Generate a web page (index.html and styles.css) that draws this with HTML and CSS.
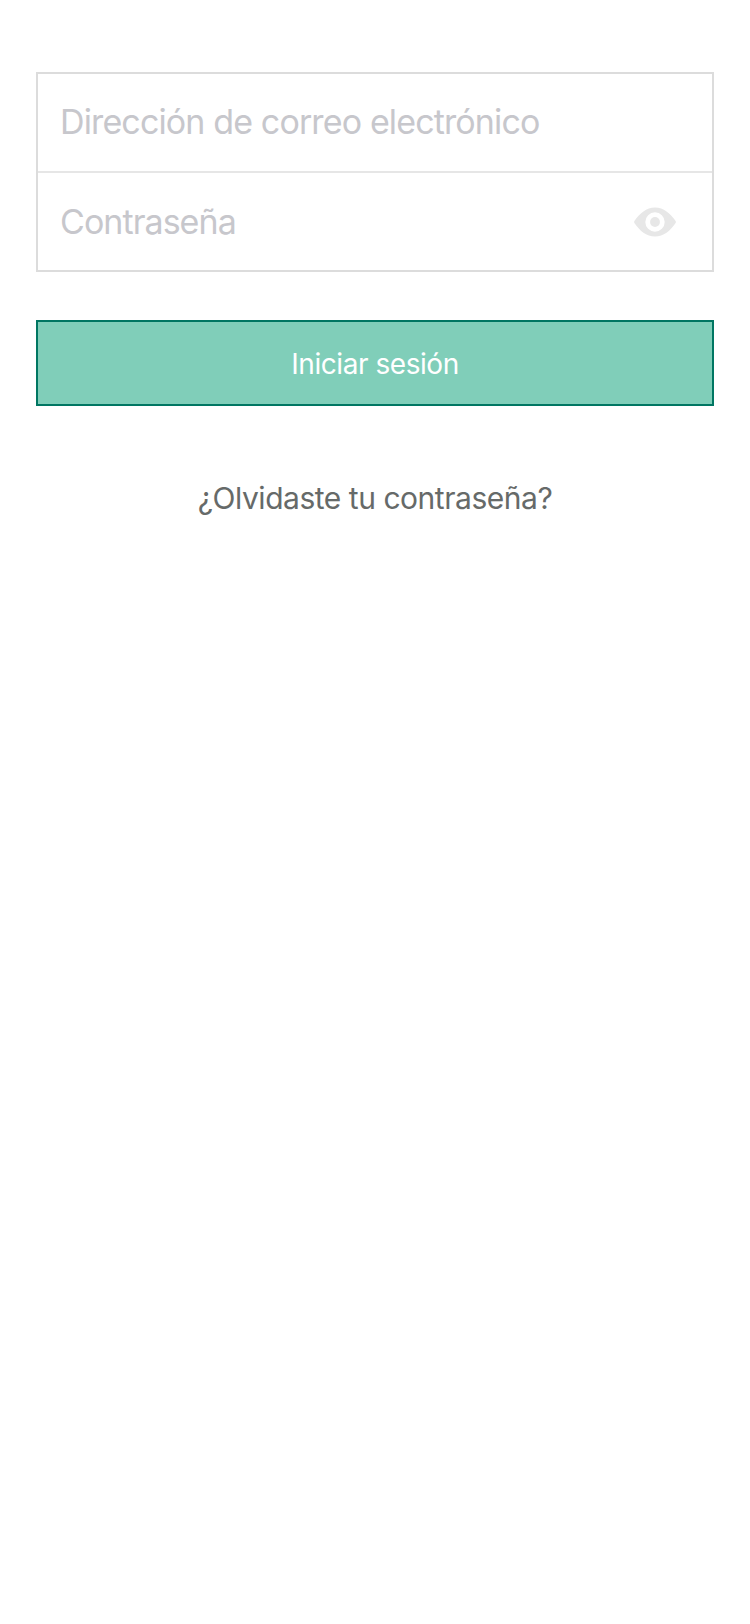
FILE: index.html
```html
<!DOCTYPE html>
<html lang="es">
<head>
<meta charset="utf-8">
<title>Iniciar sesión</title>
<link rel="stylesheet" href="styles.css">
</head>
<body>
<main class="login">
  <div class="fields">
    <div class="field"><span class="label label-email">Dirección de correo electrónico</span></div>
    <div class="field field-password">
      <span class="label label-password">Contraseña</span>
      <svg class="eye" viewBox="0 0 42 30" width="42" height="30" aria-hidden="true">
        <path fill-rule="evenodd" d="M21 .5C12.500 .5 5.500 6.500 .4 14.100Q-.2 15 .4 15.900C5.500 23.500 12.500 29.500 21 29.500S36.500 23.500 41.600 15.900Q42.200 15 41.600 14.100C36.500 6.500 29.500 .5 21 .5Zm0 24.200a9.700 9.700 0 1 1 0-19.400 9.700 9.700 0 0 1 0 19.400Z"/>
        <circle cx="21" cy="15" r="4.900"/>
      </svg>
    </div>
  </div>
  <button class="submit" type="button"><span class="submit-text">Iniciar sesión</span></button>
  <a class="forgot"><span class="forgot-text">¿Olvidaste tu contraseña?</span></a>
</main>
</body>
</html>
```

FILE: styles.css
```css
body { margin: 0; background: #fff; font-family: Inter, "Liberation Sans", sans-serif; }
.login { display: flex; flex-direction: column; padding: 72px 36px 0; }
.fields { border: 2px solid #dcdcdc; }
.field { display: flex; align-items: center; justify-content: space-between; box-sizing: border-box; height: 97px; padding: 0 36px 0 22px; }
.field-password { height: 99px; border-top: 2px solid #e6e6e6; }
.label { font-size: 34px; line-height: 42px; color: #c7c7cc; white-space: nowrap; }
.label-email { padding-bottom: 2px; letter-spacing: -0.87px; }
.label-password { letter-spacing: -0.95px; }
.eye { fill: #e7e7e7; }
.submit { box-sizing: border-box; height: 86px; margin: 48px 0 0; padding: 1px 0 0; border: 2px solid #007662; border-radius: 0; background: #80ceb9; color: #fff; font: 28px/34px Inter, "Liberation Sans", sans-serif; letter-spacing: -0.45px; }
.forgot { margin-top: 73px; text-align: center; font-size: 30px; line-height: 38px; letter-spacing: -0.47px; color: #666a69; }
```
